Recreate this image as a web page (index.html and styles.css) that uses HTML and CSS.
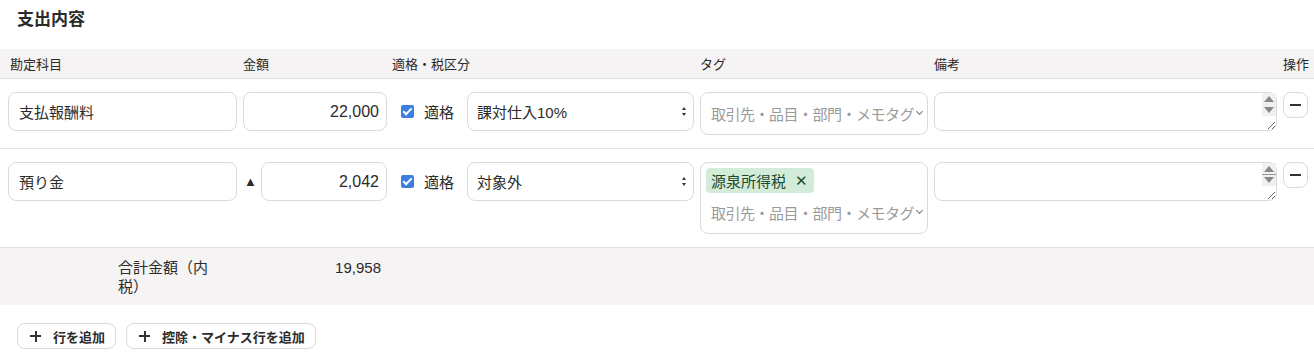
FILE: index.html
```html
<!DOCTYPE html>
<html lang="ja">
<head>
  <meta charset="UTF-8" />
  <title>支出内容</title>
  <link rel="stylesheet" href="styles.css">
</head>
<body>
  <h2 class="section-title">支出内容</h2>

  <div class="lines">
    <!-- header -->
    <div class="row head">
      <div>勘定科目</div>
      <div>金額</div>
      <div class="span-tax">適格・税区分</div>
      <div>タグ</div>
      <div>備考</div>
      <div class="op">操作</div>
    </div>

    <!-- line 1 -->
    <div class="row line">
      <input class="field" type="text" value="支払報酬料" />
      <div class="amount">
        <input class="field num" type="text" value="22,000" />
      </div>
      <label class="qualified"><span class="check"></span>適格</label>
      <div class="select">課対仕入10%<span class="updown"></span></div>
      <div class="tags">
        <div class="tag-input"><span class="ph">取引先・品目・部門・メモタグ</span><span class="chev"></span></div>
      </div>
      <div class="memo"><textarea></textarea><span class="spin"></span></div>
      <button class="minus" type="button"><span></span></button>
    </div>

    <!-- line 2 -->
    <div class="row line">
      <input class="field" type="text" value="預り金" />
      <div class="amount">
        <span class="minus-mark">▲</span>
        <input class="field num" type="text" value="2,042" />
      </div>
      <label class="qualified"><span class="check"></span>適格</label>
      <div class="select">対象外<span class="updown"></span></div>
      <div class="tags">
        <span class="chip">源泉所得税<span class="x">✕</span></span>
        <div class="tag-input"><span class="ph">取引先・品目・部門・メモタグ</span><span class="chev"></span></div>
      </div>
      <div class="memo"><textarea></textarea><span class="spin split"></span></div>
      <button class="minus" type="button"><span></span></button>
    </div>

    <!-- total -->
    <div class="total">
      <div class="total-label">合計金額（内税）</div>
      <div class="total-value">19,958</div>
    </div>
  </div>

  <div class="actions">
    <button class="btn" type="button"><span class="plus"></span>行を追加</button>
    <button class="btn" type="button"><span class="plus"></span>控除・マイナス行を追加</button>
  </div>
</body>
</html>
```

FILE: styles.css
```css
:root {
  --text: #2b2b2b;
  --muted: #9a9a9a;
  --line: #e2e2e2;
  --field-border: #dcdbd3;
  --band: #f5f3f3;
  --blue: #3d7fe0;
}

body {
  margin: 0;
  font-family: "Liberation Sans", "Noto Sans CJK JP", sans-serif;
  color: var(--text);
  font-size: 15px;
  background: #fff;
}

.section-title {
  margin: 0;
  padding: 5px 17px 0;
  height: 42px;
  box-sizing: border-box;
  font-size: 17px;
  font-weight: 700;
}

.row {
  display: grid;
  grid-template-columns: 229px 144px 68px 227px 228px 343px 25px;
  column-gap: 6px;
  padding: 0 6px 0 8px;
}

.head {
  background: var(--band);
  border-bottom: 1px solid var(--line);
  height: 30px;
  align-items: center;
  font-size: 13px;
  margin-top: 7px;
  box-sizing: border-box;
}

.head div:first-child {
  padding-left: 2px;
}

.head .span-tax {
  grid-column: span 2;
  margin-left: -1px;
}

.head .op {
  text-align: right;
  margin-right: -1px;
}

.line {
  padding-top: 13px;
  padding-bottom: 13px;
  border-bottom: 1px solid var(--line);
  align-items: start;
}

.field {
  box-sizing: border-box;
  height: 39px;
  width: 100%;
  border: 1px solid var(--field-border);
  border-radius: 8px;
  padding: 0 10px;
  font: inherit;
  color: var(--text);
  background: #fff;
}

.field.num {
  text-align: right;
  padding-right: 7px;
  font-size: 16px;
}

.amount {
  display: flex;
  align-items: center;
}

.minus-mark {
  font-size: 13px;
  width: 17px;
  flex: none;
  padding-left: 1px;
}

.qualified {
  display: flex;
  align-items: center;
  height: 39px;
  padding-left: 8px;
  gap: 10px;
}

.check {
  width: 13px;
  height: 13px;
  border-radius: 2px;
  background: var(--blue);
  position: relative;
  flex: none;
}

.check::after {
  content: "";
  position: absolute;
  left: 4px;
  top: 1px;
  width: 3px;
  height: 7px;
  border: solid #fff;
  border-width: 0 2px 2px 0;
  transform: rotate(45deg);
}

.select {
  box-sizing: border-box;
  height: 39px;
  border: 1px solid var(--field-border);
  border-radius: 8px;
  padding: 0 9px;
  display: flex;
  align-items: center;
  justify-content: space-between;
}

.updown {
  width: 0;
  height: 9px;
  position: relative;
}

.updown::before,
.updown::after {
  content: "";
  position: absolute;
  left: -2px;
  border-left: 2.5px solid transparent;
  border-right: 2.5px solid transparent;
}

.updown::before {
  top: 0;
  border-bottom: 3px solid #333;
}

.updown::after {
  bottom: 0;
  border-top: 3px solid #333;
}

.tags {
  box-sizing: border-box;
  min-height: 42px;
  border: 1px solid var(--field-border);
  border-radius: 8px;
  padding: 5px 5px 6px 5px;
  display: flex;
  flex-direction: column;
  align-items: flex-start;
  gap: 4px;
}

.tag-input {
  color: var(--muted);
  display: flex;
  align-items: center;
  width: 100%;
  height: 30px;
  padding-left: 5px;
  white-space: nowrap;
  box-sizing: border-box;
}

.ph {
  letter-spacing: -0.5px;
}

.chev {
  flex: none;
  width: 4px;
  height: 4px;
  margin: -4px 0 0 3px;
  border: solid #777;
  border-width: 0 1px 1px 0;
  transform: rotate(45deg);
}

.chip {
  background: #d3ecd9;
  color: #1e4a2c;
  border-radius: 4px;
  padding: 2px 6px 2px 5px;
  display: inline-flex;
  align-items: center;
  gap: 9px;
}

.chip .x {
  font-size: 15px;
}

.memo {
  position: relative;
}

.memo textarea {
  box-sizing: border-box;
  display: block;
  width: 100%;
  height: 39px;
  border: 1px solid var(--field-border);
  border-radius: 8px;
  resize: vertical;
  font: inherit;
}

.spin {
  position: absolute;
  right: 1px;
  top: 1px;
  width: 14px;
  height: 23px;
  background: #f0f0f0;
}

.spin::before,
.spin::after {
  content: "";
  position: absolute;
  left: 2px;
  border-left: 5px solid transparent;
  border-right: 5px solid transparent;
}

.spin::before {
  top: 3px;
  border-bottom: 6px solid #888;
}

.spin::after {
  bottom: 3px;
  border-top: 6px solid #888;
}

.spin.split {
  background: linear-gradient(#f0f0f0 11px, #9a9a9a 11px, #9a9a9a 12px, #f0f0f0 12px);
}

.minus {
  box-sizing: border-box;
  width: 25px;
  height: 26px;
  border: 1px solid var(--field-border);
  border-radius: 8px;
  background: #fff;
  padding: 0;
  display: flex;
  align-items: center;
  justify-content: center;
}

.minus span {
  width: 11px;
  height: 2px;
  background: #333;
}

.total {
  display: flex;
  background: var(--band);
  height: 57px;
  padding: 10px 0 0 118px;
  box-sizing: border-box;
}

.total-label {
  width: 96px;
  line-height: 19px;
}

.total-value {
  width: 167px;
  text-align: right;
  line-height: 19px;
}

.actions {
  display: flex;
  gap: 10px;
  padding: 18px 17px 0;
}

.btn {
  height: 26px;
  border: 1px solid var(--field-border);
  border-radius: 8px;
  background: #fff;
  font-family: inherit;
  font-size: 13px;
  font-weight: 700;
  color: var(--text);
  padding: 0 10px 0 12px;
  display: flex;
  align-items: center;
  gap: 12px;
}

.plus {
  width: 11px;
  height: 11px;
  background:
    linear-gradient(#333, #333) center / 11px 2px no-repeat,
    linear-gradient(#333, #333) center / 2px 11px no-repeat;
}
```
